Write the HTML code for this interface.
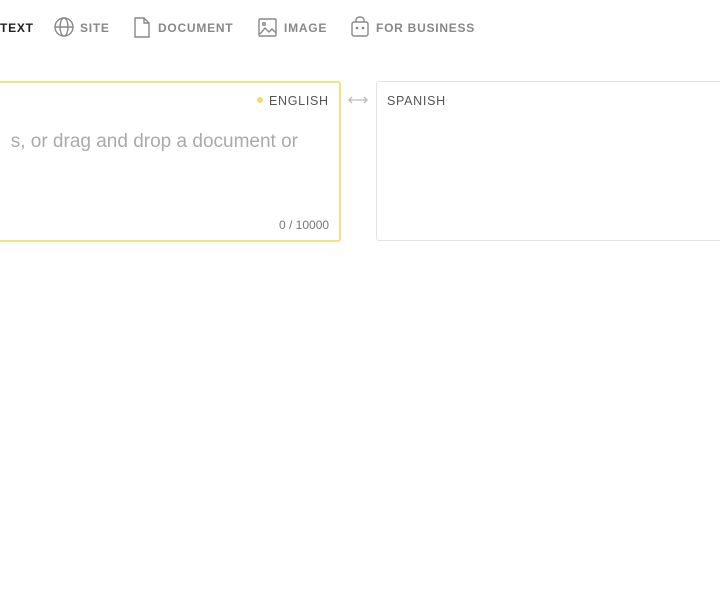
<!DOCTYPE html>
<html><head><style>
body{margin:0;width:720px;height:591px;background:#fff;position:relative;overflow:hidden;font-family:"Liberation Sans",sans-serif}
.nav{position:absolute;top:21px;font-size:12px;font-weight:bold;letter-spacing:.75px;color:#888;}
.a{position:absolute;}
svg{position:absolute}
</style></head><body>
<div class="nav" style="left:0;color:#222">TEXT</div>
<svg style="left:54px;top:17px" width="20" height="20" viewBox="0 0 20 20" fill="none" stroke="#888" stroke-width="1.4"><circle cx="10" cy="10" r="9"/><ellipse cx="10" cy="10" rx="4" ry="9"/><line x1="1" y1="10" x2="19" y2="10"/></svg>
<div class="nav" style="left:80px">SITE</div>
<svg style="left:134px;top:17px" width="16" height="21" viewBox="0 0 16 21" fill="none" stroke="#888" stroke-width="1.4"><path d="M1 1h9l5 5v14H1z"/><path d="M10 1v5h5"/></svg>
<div class="nav" style="left:158px">DOCUMENT</div>
<svg style="left:258px;top:18px" width="19" height="19" viewBox="0 0 19 19" fill="none" stroke="#888" stroke-width="1.4"><rect x="1" y="1" width="17" height="17" rx="1"/><path d="M2 16l5-6 4 4 3-3 4 4"/><circle cx="6" cy="6" r="1.3"/></svg>
<div class="nav" style="left:284px">IMAGE</div>
<svg style="left:351px;top:16px" width="18" height="21" viewBox="0 0 18 21" fill="none" stroke="#888" stroke-width="1.4"><rect x="1" y="6" width="16" height="14" rx="2"/><path d="M5 6V4a4 3 0 0 1 8 0v2"/><circle cx="6" cy="12" r=".6"/><circle cx="12" cy="12" r=".6"/></svg>
<div class="nav" style="left:376px">FOR BUSINESS</div>

<div class="a" style="left:-10px;top:81px;width:347px;height:157px;border:2px solid #f5e180;border-radius:3px"></div>
<div class="a" style="left:257px;top:97px;width:6px;height:6px;border-radius:50%;background:#f3d873"></div>
<div class="a" style="left:269px;top:94px;font-size:12.5px;letter-spacing:.7px;color:#555">ENGLISH</div>
<div class="a" style="left:-10px;top:131px;font-size:19px;color:#aaa;white-space:nowrap;width:308px;text-align:right">s, or drag and drop a document or</div>
<div class="a" style="left:279px;top:218px;font-size:12px;color:#777">0 / 10000</div>
<svg style="left:347px;top:95px" width="22" height="10" viewBox="0 0 22 10" fill="none" stroke="#bbb" stroke-width="1.3"><path d="M2 5h18M5 2L2 5l3 3M17 2l3 3-3 3"/></svg>
<div class="a" style="left:376px;top:81px;width:360px;height:158px;border:1px solid #e3e3e3;border-radius:3px"></div>
<div class="a" style="left:387px;top:94px;font-size:12.5px;letter-spacing:.7px;color:#555">SPANISH</div>
</body></html>
